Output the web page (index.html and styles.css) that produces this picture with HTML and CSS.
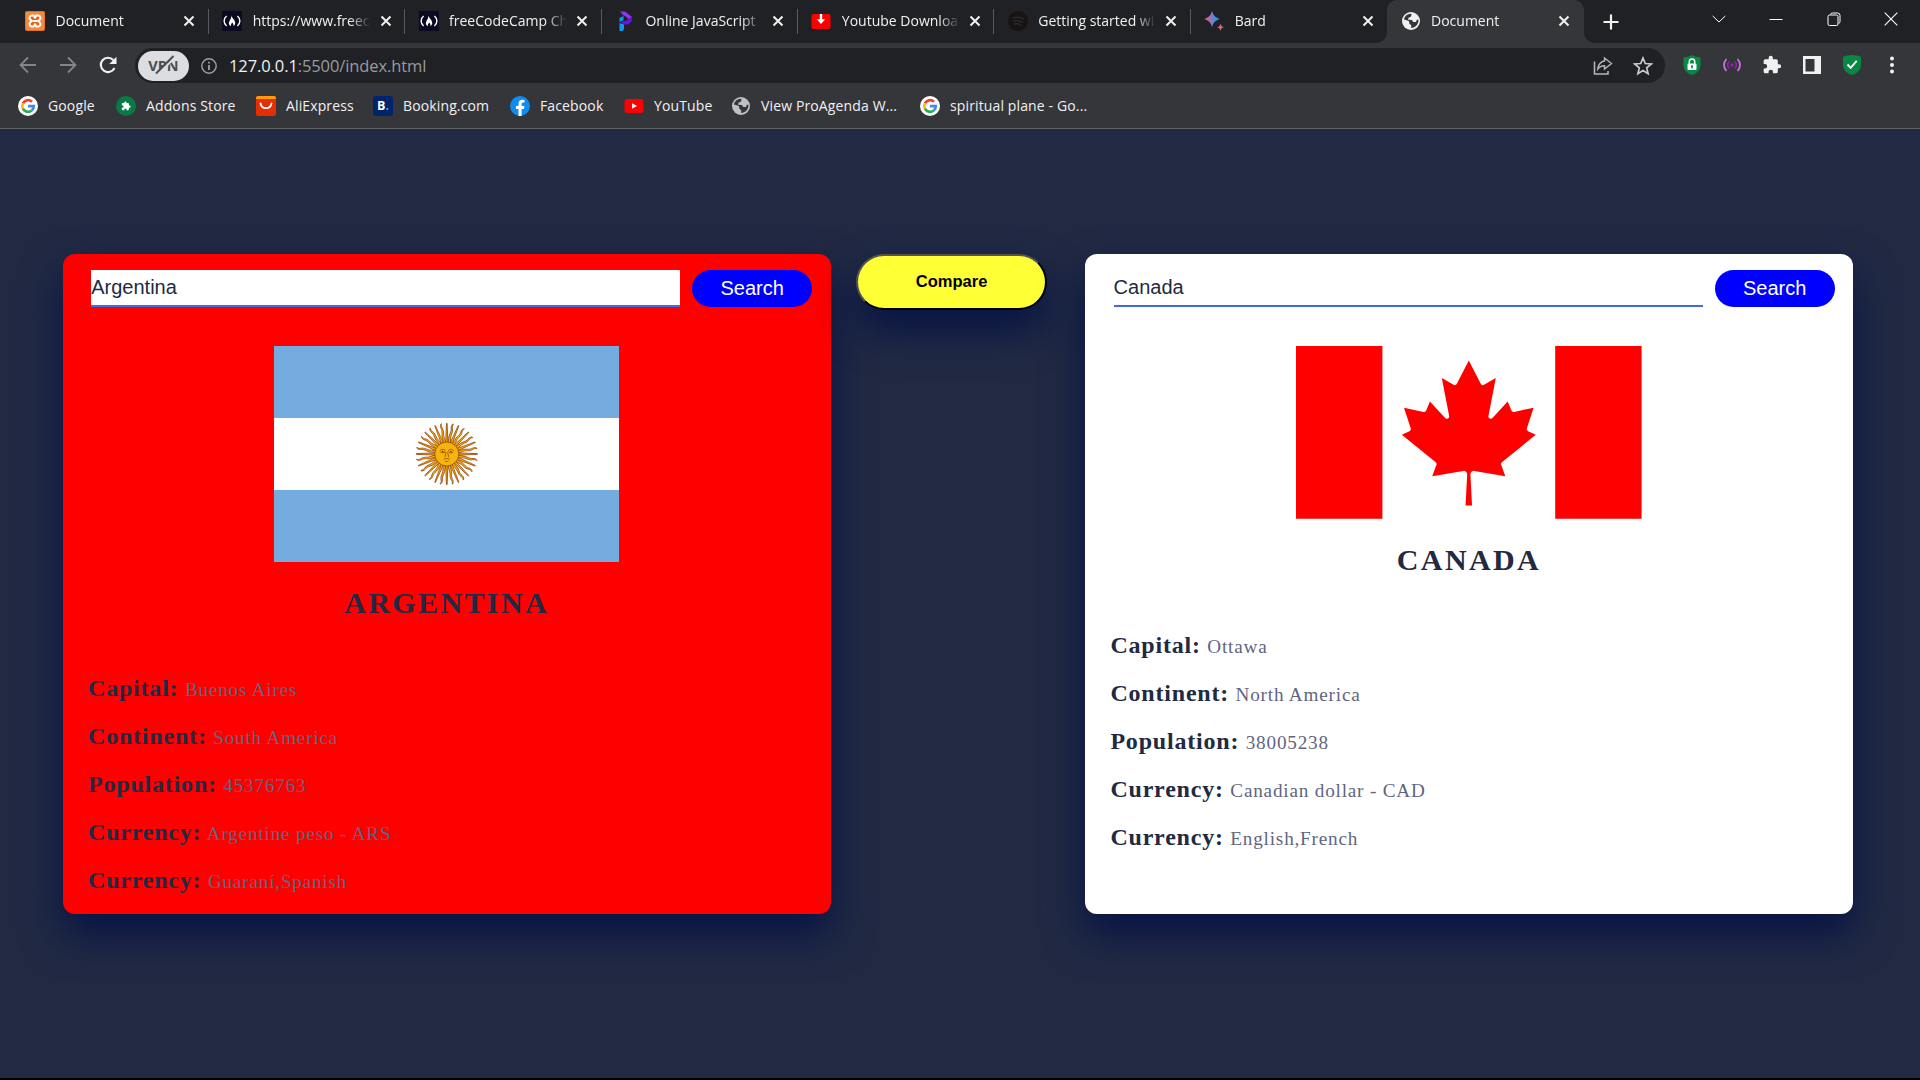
FILE: index.html
```html
<!DOCTYPE html>
<html lang="en">
<head>
<meta charset="utf-8">
<title>Document</title>
<link rel="stylesheet" href="styles.css">
</head>
<body>
<svg class="defs" width="0" height="0" aria-hidden="true">
  <defs>
    <symbol id="close" viewBox="0 0 12 12"><path d="M1.5 1.5l9 9M10.500 1.500l-9 9" stroke="#f1f1f2" stroke-width="2" fill="none"/></symbol>
    <symbol id="fcc" viewBox="0 0 20 20"><path fill="#0a0a23" d="M0 0h20v20H0z"/><path d="M4.600 5C1.300 7.500 1.300 12.500 4.600 15M15.400 5c3.300 2.500 3.300 7.500 0 10" fill="none" stroke="#fff" stroke-width="1.400"/><path d="M9.300 4.500c.8 2.800 3.900 4.600 3.900 7.600 0 1.500-.8 2.500-1.800 3.100.5-1.700-.2-2.800-1.300-3.800-.2 1.100-1.700 1.900-1.200 3.800-1.500-.6-2.200-1.700-2-3.100.3-2.500 2.700-4.300 2.400-7.600z" fill="#fff"/></symbol>
    <symbol id="globe" viewBox="0 0 20 20"><circle cx="10" cy="10" r="9" fill="currentColor"/><path d="M10.500 2.800l-.4 2.700-2.600 1.200-.4 2 3.800.2 1.400 2 2.800.2.500-2 1.800-.5c.4 4.600-3 8.500-7.300 8.500l.2-2.500-2-2.200-.4-2.300-4.800-1.500C3 5.500 6.800 2.400 10.500 2.800z" fill="#35363a"/></symbol>
    <symbol id="google" viewBox="0 0 20 20"><circle cx="10" cy="10" r="10" fill="#fff"/><g fill="none" stroke-width="2.700"><path d="M4.900 7.300A5.800 5.800 0 0 1 14 5.800" stroke="#ea4335"/><path d="M4.900 12.700a5.800 5.800 0 0 1 0-5.400" stroke="#fbbc05"/><path d="M13.700 14.500a5.800 5.800 0 0 1-8.800-1.800" stroke="#34a853"/><path d="M10 10.200h5.800a5.800 5.800 0 0 1-2.100 4.300" stroke="#4285f4"/></g></symbol>
    <symbol id="puzzle" viewBox="0 0 24 24"><path fill="currentColor" d="M20.500 11H19V7a2 2 0 0 0-2-2h-4V3.500a2.500 2.500 0 0 0-5 0V5H4a2 2 0 0 0-2 2v3.800h1.500a2.700 2.700 0 0 1 0 5.400H2V20a2 2 0 0 0 2 2h3.800v-1.500a2.700 2.700 0 0 1 5.400 0V22H17a2 2 0 0 0 2-2v-4h1.500a2.500 2.500 0 0 0 0-5z"/></symbol>
  </defs>
</svg>

<header class="browser">
  <div class="tabstrip">
    <div class="tabs">
      <div class="tab">
        <svg class="favicon" viewBox="0 0 20 20"><rect width="20" height="20" rx="2" fill="#e8702a"/><rect x="1" y="1" width="18" height="18" rx="1" fill="#f08c3e"/><path d="M6.800 4.500h1.700L10 6.600l1.500-2.100h1.700a2.400 2.400 0 0 1 1.200 4.400L13.200 10l1.200 1a2.500 2.500 0 0 1-1.200 4.500h-1.700L10 13.400l-1.500 2.100H6.800A2.500 2.500 0 0 1 5.600 11l1.200-1-1.200-1.100a2.400 2.400 0 0 1 1.200-4.400z" fill="#e8621b" stroke="#fff" stroke-width="2"/><path d="M7.500 10h5" stroke="#fff" stroke-width="2"/></svg>
        <span class="tab-title">Document</span><svg class="tab-close"><use href="#close"/></svg>
      </div>
      <div class="tab">
        <svg class="favicon"><use href="#fcc"/></svg>
        <span class="tab-title">https://www.freec</span><svg class="tab-close"><use href="#close"/></svg>
      </div>
      <div class="tab">
        <svg class="favicon"><use href="#fcc"/></svg>
        <span class="tab-title">freeCodeCamp Ch</span><svg class="tab-close"><use href="#close"/></svg>
      </div>
      <div class="tab">
        <svg class="favicon" viewBox="0 0 20 20"><path d="M5 .5h5l7 5.500-2.500 3.500L11.500 6 8 4z" fill="#9333f5"/><path d="M17 6l-.5 4.500L13 13.500H8.500L5.500 11l6-1.500 2-2z" fill="#6a11e8"/><path d="M4.500 7L8.500 5v4l-4 2zM4.500 12l4.500 1.500V18l-1.500 2h-3z" fill="#0b9bf2"/></svg>
        <span class="tab-title">Online JavaScript</span><svg class="tab-close"><use href="#close"/></svg>
      </div>
      <div class="tab">
        <svg class="favicon" viewBox="0 0 20 20"><rect x=".5" y="3" width="19" height="15" rx="2" fill="#f00"/><path d="M8.800 3h2.400v5.200h3L10 13 5.800 8.200h3z" fill="#fff"/></svg>
        <span class="tab-title">Youtube Downloa</span><svg class="tab-close"><use href="#close"/></svg>
      </div>
      <div class="tab">
        <svg class="favicon" viewBox="0 0 20 20"><circle cx="10" cy="10" r="10" fill="#191414"/><path d="M4.500 7c4-1.200 8-.8 11.500 1M5 10.200c3.500-1 6.800-.6 9.800 1M5.500 13.200c3-.8 5.500-.5 8 .9" fill="none" stroke="#292a2c" stroke-width="1.500"/></svg>
        <span class="tab-title">Getting started wi</span><svg class="tab-close"><use href="#close"/></svg>
      </div>
      <div class="tab">
        <svg class="favicon" viewBox="0 0 20 20"><defs><linearGradient id="bard"><stop stop-color="#e8645a"/><stop offset=".45" stop-color="#9a6fc4"/><stop offset=".75" stop-color="#1e9be8"/></linearGradient></defs><path d="M8 0c1.300 4.500 3.500 6.700 8 8-4.500 1.300-6.700 3.500-8 8-1.300-4.500-3.500-6.700-8-8 4.500-1.300 6.700-3.500 8-8z" fill="url(#bard)"/><path d="M16.500 12.500c.6 2.300 1.200 3 3.500 3.700-2.300.7-2.900 1.500-3.500 3.800-.6-2.300-1.200-3.100-3.500-3.800 2.300-.7 2.900-1.400 3.500-3.700z" fill="#d2667c"/></svg>
        <span class="tab-title">Bard</span><svg class="tab-close"><use href="#close"/></svg>
      </div>
      <div class="tab active">
        <svg class="favicon light"><use href="#globe"/></svg>
        <span class="tab-title">Document</span><svg class="tab-close"><use href="#close"/></svg>
      </div>
    </div>
    <svg class="new-tab" viewBox="0 0 16 16"><path d="M8 .5v15M.5 8h15" stroke="#f1f1f2" stroke-width="2.200"/></svg>
    <div class="window-controls">
      <svg viewBox="0 0 14 14"><path d="M.7 4l6.300 6 6.300-6" fill="none" stroke="#fff"/></svg>
      <svg viewBox="0 0 14 14"><path d="M.5 7.500h13" stroke="#fff"/></svg>
      <svg viewBox="0 0 14 14"><path d="M3.500 2.500a2 2 0 0 1 2-1.500h5A2.500 2.500 0 0 1 13 3.500v6a2 2 0 0 1-1.500 2" fill="none" stroke="#fff"/><rect x="1" y="3" width="10" height="10.500" rx="1.500" fill="none" stroke="#fff"/></svg>
      <svg viewBox="0 0 14 14"><path d="M.7.7l12.600 12.600M13.300.7L.7 13.300" stroke="#fff" stroke-width="1.100"/></svg>
    </div>
  </div>

  <div class="toolbar">
    <div class="nav">
      <svg viewBox="0 0 18 18"><path d="M17 9H2M9 1.500L1.500 9 9 16.500" fill="none" stroke="#85868a" stroke-width="1.800"/></svg>
      <svg viewBox="0 0 18 18"><path d="M1 9h15M9 1.500L16.500 9 9 16.500" fill="none" stroke="#85868a" stroke-width="1.800"/></svg>
      <svg viewBox="0 0 18 18"><path d="M15.500 12A7.200 7.200 0 1 1 14.300 4" fill="none" stroke="#f1f1f2" stroke-width="2.100"/><path d="M17.500.8V8h-7.200z" fill="#f1f1f2"/></svg>
    </div>
    <div class="omnibox">
      <div class="vpn">VPN<svg class="vpn-slash" viewBox="0 0 20 20"><path d="M2.500 19.500L20 2.500" stroke="#dcdde1" stroke-width="2.200"/><path d="M1 18.500L18.500 1" stroke="#4c4d51" stroke-width="2"/></svg></div>
      <svg class="info" viewBox="0 0 16 16"><circle cx="8" cy="8" r="7.200" fill="none" stroke="#9aa0a6" stroke-width="1.400"/><path d="M8 7v5M8 3.800v1.800" stroke="#9aa0a6" stroke-width="1.800"/></svg>
      <div class="url">127.0.0.1<span>:5500/index.html</span></div>
      <svg class="share" viewBox="0 0 20 20"><path d="M1.500 5.500V18H15v-3" fill="none" stroke="#b4b6b9" stroke-width="1.600"/><path d="M11.500 2l7 5.500-7 5.500V9.800c-3 0-5 .7-6.700 3.200C5 8.500 8 5.300 11.500 5z" fill="none" stroke="#b4b6b9" stroke-width="1.400"/></svg>
      <svg class="star" viewBox="0 0 20 20"><path d="M10 2l2.300 5.500 6 .5-4.600 3.900 1.400 5.800L10 14.600l-5.100 3.100 1.400-5.800L1.700 8l6-.5z" fill="none" stroke="#c8cacc" stroke-width="1.700"/></svg>
    </div>
    <div class="extensions">
      <svg viewBox="0 0 20 20"><path d="M10 0c2.500 1.500 5.500 2.300 8.500 2.500V10c0 5-3.500 8.500-8.500 10-5-1.500-8.500-5-8.500-10V2.500C4.500 2.300 7.500 1.500 10 0z" fill="#078945"/><path d="M7.300 9V6.800a2.700 2.700 0 0 1 5.400 0V9" fill="none" stroke="#fff" stroke-width="1.500"/><rect x="5.500" y="8.500" width="9" height="6.500" rx="1" fill="#fff"/><path d="M10 10.300v3" stroke="#078945" stroke-width="1.700"/></svg>
      <svg viewBox="0 0 20 20"><g fill="none" stroke-width="1.800" stroke="#c27ad3"><path d="M4.500 4c-3.300 3.500-3.300 8.500 0 12M15.500 4c3.300 3.500 3.300 8.500 0 12"/><path d="M7 6.500c-1.800 2-1.800 5 0 7M13 6.500c1.800 2 1.800 5 0 7" stroke="#8e24aa"/></g><circle cx="10" cy="10" r="1.800" fill="#8e24aa"/></svg>
      <svg viewBox="0 0 24 24" class="light"><use href="#puzzle"/></svg>
      <svg viewBox="0 0 20 20"><path fill="#f1f1f2" fill-rule="evenodd" d="M1 1h18v18H1zM3.500 4v12.500h9V4z"/></svg>
      <svg viewBox="0 0 20 20"><path d="M10 0c3 .1 6 .8 9 1.800V10c0 5-4 8.500-9 10-5-1.500-9-5-9-10V1.800C4 .8 7 .1 10 0z" fill="#078945"/><path d="M5.500 9.500l3.200 3.300 6-7" fill="none" stroke="#fff" stroke-width="1.900"/></svg>
      <svg viewBox="0 0 20 20"><g fill="#f1f1f2"><circle cx="10" cy="3.500" r="2"/><circle cx="10" cy="10" r="2"/><circle cx="10" cy="16.500" r="2"/></g></svg>
    </div>
  </div>

  <nav class="bookmarks">
    <div class="bookmark"><svg><use href="#google"/></svg><span>Google</span></div>
    <div class="bookmark"><svg viewBox="0 0 20 20"><circle cx="10" cy="10" r="10" fill="#087b45"/><g color="#fff"><use href="#puzzle" x="5" y="5" width="10" height="10"/></g></svg><span>Addons Store</span></div>
    <div class="bookmark"><svg viewBox="0 0 20 20"><rect width="20" height="20" rx="2.500" fill="#e62e04"/><path d="M0 3V2a2 2 0 0 1 2-2h16a2 2 0 0 1 2 2v1z" fill="#ff9a00"/><path d="M4.500 7.300c1 6.500 10 6.500 11 0" fill="none" stroke="#fff" stroke-width="1.800" stroke-linecap="round"/></svg><span>AliExpress</span></div>
    <div class="bookmark"><div class="booking">B<i>.</i></div><span>Booking.com</span></div>
    <div class="bookmark"><svg viewBox="0 0 20 20"><circle cx="10" cy="10" r="10" fill="#0f8cf1"/><path d="M8.500 20v-7H6v-3h2.500V7.800c0-2.600 1.500-4 3.800-4l2.200.2v2.500h-1.300c-1.200 0-1.600.7-1.600 1.500v2h2.800l-.5 3h-2.300v7z" fill="#fff"/></svg><span>Facebook</span></div>
    <div class="bookmark"><svg viewBox="0 0 20 20"><rect x=".5" y="3" width="19" height="14" rx="3" fill="#f00"/><path d="M8 7.300l5 2.700-5 2.700z" fill="#fff"/></svg><span>YouTube</span></div>
    <div class="bookmark gray"><svg><use href="#globe"/></svg><span>View ProAgenda W...</span></div>
    <div class="bookmark"><svg><use href="#google"/></svg><span>spiritual plane - Go...</span></div>
  </nav>
</header>

<main class="page">
  <section class="card winner">
    <form class="search">
      <input class="search-input" type="text" value="Argentina">
      <button class="search-button" type="button">Search</button>
    </form>
    <svg class="flag" viewBox="0 0 800 500">
      <path fill="#fff" d="M0 0h800v500H0z"/>
      <path fill="#74acdf" d="M0 0h800v166.670H0zM0 333.330h800V500H0z"/>
      <defs>
        <path id="ray" stroke-width="1.500" stroke="#85340a" fill="#f6b40e" d="m396.840 251.310 28.454 61.992s.49 1.185 1.280.859c.79-.327.299-1.512.299-1.512l-23.715-63.956m-.68 24.120c-.347 9.428 5.452 14.613 4.694 23.032-.757 8.420 3.867 13.180 4.940 16.454 1.073 3.274-1.160 5.232-.198 5.698.963.466 3.070-2.120 2.383-6.775-.687-4.655-4.220-6.037-3.390-16.320.83-10.283-4.206-12.678-2.980-22.058"/>
        <g id="quarter"><use href="#ray"/><use href="#ray" transform="rotate(22.500 400 250)"/><use href="#ray" transform="rotate(45 400 250)"/><use href="#ray" transform="rotate(67.500 400 250)"/></g>
      </defs>
      <g transform="translate(400 250) scale(1.030) translate(-400 -250)">
        <use href="#quarter"/><use href="#quarter" transform="rotate(90 400 250)"/><use href="#quarter" transform="rotate(180 400 250)"/><use href="#quarter" transform="rotate(270 400 250)"/>
      </g>
      <circle cx="400" cy="250" r="27.800" fill="#f6b40e" stroke="#85340a" stroke-width="1.500"/>
      <g fill="none" stroke="#85340a" stroke-width="1.500"><path d="M384 243c3-5 10-5 13 0M403 243c3-5 10-5 13 0M385 245c4 3 8 3 11 0M404 245c4 3 8 3 11 0M398 245l-2 12M402 245l2 12M393 262c4-2 10-2 14 0M396 266c3 2 5 2 8 0"/></g>
      <circle cx="390.500" cy="244.500" r="2" fill="#85340a"/><circle cx="409.500" cy="244.500" r="2" fill="#85340a"/>
    </svg>
    <h2 class="country">ARGENTINA</h2>
    <div class="facts">
      <div class="fact"><b>Capital:</b> <span>Buenos Aires</span></div>
      <div class="fact"><b>Continent:</b> <span>South America</span></div>
      <div class="fact"><b>Population:</b> <span>45376763</span></div>
      <div class="fact"><b>Currency:</b> <span>Argentine peso - ARS</span></div>
      <div class="fact"><b>Currency:</b> <span>Guaraní,Spanish</span></div>
    </div>
  </section>

  <button class="compare" type="button">Compare</button>

  <section class="card">
    <form class="search">
      <input class="search-input" type="text" value="Canada">
      <button class="search-button" type="button">Search</button>
    </form>
    <svg class="flag" viewBox="-4800 -2400 9600 4800">
      <path fill="#fff" d="M-4800-2400h9600v4800h-9600z"/>
      <path fill="#f00" d="M-4800-2400h2400v4800h-2400zM2400-2400h2400v4800H2400zM-90 2030l45-863a95 95 0 0 0-111-98l-859 151 116-320a65 65 0 0 0-20-73l-941-762 212-99a65 65 0 0 0 34-79l-186-572 542 115a65 65 0 0 0 73-38l105-247 423 454a65 65 0 0 0 111-57l-204-1052 327 189a65 65 0 0 0 91-27l332-652 332 652a65 65 0 0 0 91 27l327-189-204 1052a65 65 0 0 0 111 57l423-454 105 247a65 65 0 0 0 73 38l542-115-186 572a65 65 0 0 0 34 79l212 99-941 762a65 65 0 0 0-20 73l116 320-859-151a95 95 0 0 0-111 98l45 863z"/>
    </svg>
    <h2 class="country">CANADA</h2>
    <div class="facts">
      <div class="fact"><b>Capital:</b> <span>Ottawa</span></div>
      <div class="fact"><b>Continent:</b> <span>North America</span></div>
      <div class="fact"><b>Population:</b> <span>38005238</span></div>
      <div class="fact"><b>Currency:</b> <span>Canadian dollar - CAD</span></div>
      <div class="fact"><b>Currency:</b> <span>English,French</span></div>
    </div>
  </section>
</main>
</body>
</html>
```
FILE: styles.css
```css
* { box-sizing: border-box; }
body {
  margin: 0;
  width: 1920px;
  height: 1080px;
  overflow: hidden;
  display: flex;
  flex-direction: column;
  background: #222a43;
  border-bottom: 2px solid #000;
}
.defs { position: absolute; }
svg { display: block; flex: none; }

/* Browser chrome */
.browser {
  height: 129px;
  flex: none;
  background: #35363a;
  border-bottom: 1px solid #606165;
  font: 14px/20px "Open Sans", "Noto Sans", sans-serif;
  color: #f1f1f2;
}
.tabstrip {
  height: 43px;
  background: #202124;
  display: flex;
  align-items: center;
  padding-left: 12.500px;
}
.tabs { display: flex; align-self: stretch; }
.tab {
  width: 196.400px;
  display: flex;
  align-items: center;
  padding: 0 13px 2px 13.300px;
  background: linear-gradient(#5a5b5f, #5a5b5f) right 9px / 1px 25px no-repeat;
}
.tab:first-child { padding-left: 12.500px; }
.tab:nth-last-child(2) { background: none; }
.tab.active {
  background: #35363a;
  border-radius: 10px 10px 0 0;
  margin-right: 19.500px;
  position: relative;
}
.tab.active::before, .tab.active::after {
  content: "";
  position: absolute;
  bottom: 0;
  width: 10px;
  height: 10px;
}
.tab.active::before { left: -10px; background: radial-gradient(circle at 0 0, #202124 9.500px, #35363a 10px); }
.tab.active::after { right: -10px; background: radial-gradient(circle at 100% 0, #202124 9.500px, #35363a 10px); }
.favicon { width: 20px; height: 20px; margin-right: 10.500px; }
.light { color: #f1f1f2; }
.tab-title {
  width: 118px;
  white-space: nowrap;
  -webkit-mask-image: linear-gradient(90deg, #000 82%, transparent);
  mask-image: linear-gradient(90deg, #000 82%, transparent);
}
.tab-close { width: 12px; height: 12px; margin-left: 9px; }
.new-tab { width: 16px; height: 16px; }
.window-controls { display: flex; gap: 43.300px; margin: 0 22px 5px auto; }
.window-controls svg { width: 14px; height: 14px; }

.toolbar { height: 45px; padding-top: 5px; display: flex; align-items: flex-start; }
.nav { display: flex; gap: 22px; padding: 8px 18px 0 19px; width: 135px; }
.nav svg { width: 18px; height: 18px; }
.omnibox {
  width: 1530px;
  height: 35px;
  border-radius: 18px;
  background: #202124;
  display: flex;
  align-items: center;
  padding: 0 12.500px 0 3px;
}
.vpn {
  width: 51px;
  height: 30px;
  border-radius: 15px;
  background: #dcdde1;
  color: #4c4d51;
  font: bold 14.500px/30px "Open Sans", sans-serif;
  text-align: center;
  position: relative;
}
.vpn-slash { position: absolute; left: 17px; top: 4px; width: 20px; height: 20px; }
.info { width: 16px; height: 16px; margin: 0 12px; }
.url { font-size: 16.500px; letter-spacing: -.1px; }
.url span { color: #9a9b9f; }
.share { width: 20px; height: 20px; margin-left: auto; margin-right: 20px; }
.star { width: 20px; height: 20px; }
.extensions { display: flex; gap: 20px; padding: 7px 0 0 17px; }
.extensions svg { width: 20px; height: 20px; }

.bookmarks {
  height: 40px;
  padding-left: 18px;
  display: grid;
  grid-template-columns: 98px 140px 117px 137px 114px 107px 189px 200px;
  align-items: center;
  padding-bottom: 4px;
  letter-spacing: .13px;
}
.bookmark { display: flex; align-items: center; gap: 10px; white-space: nowrap; }
.bookmark svg { width: 20px; height: 20px; }
.bookmark.gray svg { color: #bdc1c6; }
.booking {
  width: 20px;
  height: 20px;
  border-radius: 3px;
  background: #00246b;
  color: #fff;
  font: bold 12.500px/20px "Open Sans", sans-serif;
  text-align: center;
}
.booking i { color: #1ba9f0; font-style: normal; }

/* Country comparison */
.page {
  flex: 1;
  display: flex;
  align-items: flex-start;
  justify-content: center;
  padding: 125px 4.400px 0 0;
}
.card {
  width: 768px;
  height: 660px;
  border-radius: 12px;
  background: #fff;
  box-shadow: 0 20px 40px #061345;
  color: #222a43;
  font-family: "Liberation Serif", serif;
}
.card.winner { background: #f00; }
.search {
  display: flex;
  justify-content: space-between;
  padding: 16px 18.400px 0 28.600px;
}
.search-input {
  width: 589px;
  height: 37px;
  padding: 0;
  border: 0;
  border-bottom: 2px solid #4169e1;
  background: #fff;
  color: #222a43;
  font: 20px "Liberation Sans", sans-serif;
  outline: 0;
}
.search-button {
  width: 120px;
  height: 37px;
  border: 0;
  border-radius: 20px;
  background: #00f;
  color: #fff;
  font: 20px "Liberation Sans", sans-serif;
}
.flag { width: 345.600px; height: auto; margin: 39px auto 0; }
.country {
  margin: 23px 0 0;
  font-size: 30px;
  line-height: 36px;
  letter-spacing: 2.400px;
  text-align: center;
}
.facts { padding: 43px 0 0 25.400px; }
.fact { height: 48px; line-height: 48px; font-size: 19.200px; letter-spacing: .8px; color: #5f6580; }
.fact b { font-size: 24px; color: #222a43; margin-right: .9px; }
.compare {
  width: 191px;
  height: 56px;
  margin: 0 37.900px 0 25.500px;
  padding: 0 0 2px;
  border: 2px outset #000;
  border-radius: 30px;
  background: #ffff35;
  color: #000;
  box-shadow: 0 20px 40px #061345;
  font: bold 16.500px "Liberation Sans", sans-serif;
}
```
